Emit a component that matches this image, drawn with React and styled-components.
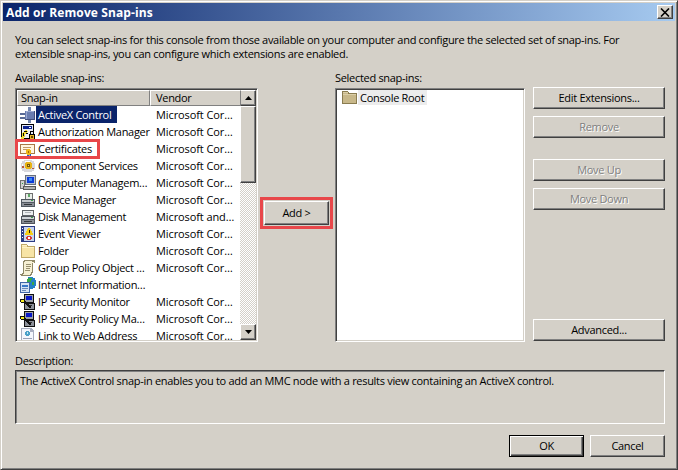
import React from "react";
import styled, { createGlobalStyle, css } from "styled-components";

const Global = createGlobalStyle`
  html, body { margin: 0; padding: 0; background: #d4d0c8; }
  * { box-sizing: border-box; }
`;

const Win = styled.div`
  width: 678px; height: 470px; background: #d4d0c8; color: #000;
  font: 11px/14px "Open Sans", "Noto Sans", sans-serif;
  letter-spacing: -0.3px;
  border: 1px solid; border-color: #d4d0c8 #404040 #404040 #d4d0c8;
  box-shadow: inset 1px 1px 0 #fff, inset -1px -1px 0 #808080;
  padding: 2px 2px 0 2px;
  display: flex; flex-direction: column;
  overflow: hidden;
`;
const TitleBar = styled.div`
  height: 18px; flex: none; display: flex; align-items: center; justify-content: space-between;
  background: linear-gradient(90deg, #0a246a, #a6caf0);
  color: #fff; font: bold 12px "Open Sans", sans-serif; letter-spacing: 0.1px;
  padding: 0 2px 0 3px;
`;
const CloseBtn = styled.div`
  width: 16px; height: 14px; background: #d4d0c8; display: flex; align-items: center; justify-content: center;
  border: 1px solid; border-color: #fff #404040 #404040 #fff;
  box-shadow: inset -1px -1px 0 #808080;
`;
const Body = styled.div`
  flex: 1; padding: 12px 10px 0 12px; display: flex; flex-direction: column;
`;
const Intro = styled.p`margin: 0; height: 28px; line-height: 14px; white-space: pre-line;`;
const Columns = styled.div`
  margin-top: 10px; display: grid; grid-template-columns: 243px 77px 190px 140px; height: 271px;
`;
const Pane = styled.div`display: flex; flex-direction: column; min-width: 0;`;
const Label = styled.div`height: 14px; margin-bottom: 3px;`;
const ListBox = styled.div`
  height: 254px; background: #fff; position: relative;
  border: 1px solid; border-color: #808080 #fff #fff #808080;
  box-shadow: inset 1px 1px 0 #404040, inset -1px -1px 0 #d4d0c8;
  padding: 1px;
  display: flex;
`;
const ListInner = styled.div`flex: 1; min-width: 0; clip-path: inset(0 -10px 0 -10px);`;
const Head = styled.div`display: grid; grid-template-columns: 133px 91px; height: 16px;`;
const HeadCell = styled.div`
  background: #d4d0c8; padding-left: ${p => p.$pad}px; line-height: 14px; white-space: nowrap;
  border: 1px solid; border-color: #fff #808080 #808080 #fff;
`;
const Row = styled.div`display: grid; grid-template-columns: 134px 90px; height: 17px; align-items: center;`;
const NameCell = styled.div`
  display: flex; align-items: center; height: ${p => p.$h || 17}px; padding-left: ${p => p.$inset}px; position: relative;
`;
const IconWrap = styled.span`width: 16px; height: 16px; flex: none; display: block;
  svg { display: block; }
`;
const Name = styled.span`
  padding: 0 1px 0 2px; height: 100%; display: flex; align-items: center; white-space: nowrap;
  ${p => p.$sel && css`background: #0a246a; color: #fff; padding-right: 6px;`}
  ${p => p.$soft && css`background: #ececec; padding-right: 3px;`}
`;
const Vendor = styled.div`padding-left: 5px; white-space: nowrap; line-height: 17px; letter-spacing: -0.1px;`;
const Callout = styled.div`
  position: absolute; left: -2px; top: -1px; width: 85px; height: 20px;
  border: 3px solid #e8474a; pointer-events: none; z-index: 2;
`;
const ScrollBar = styled.div`width: 16px; flex: none; display: flex; flex-direction: column;
  background-color: #fff;
  background-image: conic-gradient(#d4d0c8 25%, #fff 0 50%, #d4d0c8 0 75%, #fff 0);
  background-size: 2px 2px;
`;
const ScrollButton = styled.div`
  width: 16px; height: 16px; background: #d4d0c8; flex: none; display: flex; align-items: center; justify-content: center;
  border: 1px solid; border-color: #fff #404040 #404040 #fff; box-shadow: inset -1px -1px 0 #808080;
`;
const Thumb = styled(ScrollButton)`height: 77px;`;
const Track = styled.div`flex: 1;`;
const AddSlot = styled.div`padding: 130px 0 0 6px;`;
const Btn = styled.div`
  height: 22px; background: #d4d0c8; display: flex; align-items: center; justify-content: center; white-space: nowrap;
  border: 1px solid; border-color: #fff #404040 #404040 #fff; box-shadow: inset -1px -1px 0 #808080;
  ${p => p.$off && css`color: #808080; text-shadow: 1px 1px 0 #fff;`}
  ${p => p.$def && css`border: 1px solid #000; box-shadow: inset 1px 1px 0 #fff, inset -1px -1px 0 #404040, inset -2px -2px 0 #808080;`}
`;
const AddBtn = styled(Btn)`
  width: 65px; height: 24px; outline: 3px solid #e8474a; outline-offset: 1px;
`;
const Side = styled.div`display: flex; flex-direction: column; margin-left: 8px; padding: 16px 0 1px; width: 132px;`;
const SideBtn = styled(Btn)`margin-bottom: ${p => p.$gap || 7}px;`;
const Spacer = styled.div`flex: 1;`;
const DescLabel = styled.div`margin-top: 12px; height: 14px;`;
const DescBox = styled.div`
  margin-top: 2px; height: 54px; width: 650px; padding: 3px 4px;
  border: 1px solid; border-color: #404040 #fff #fff #404040;
  box-shadow: inset 1px 1px 0 #808080;
`;
const Footer = styled.div`display: flex; justify-content: flex-end; gap: 6px; margin-top: 11px; width: 650px;`;
const FootBtn = styled(Btn)`width: 75px;`;

const S = ({ children }) => (
  <svg width="16" height="16" viewBox="0 0 16 16" shapeRendering="crispEdges">{children}</svg>
);

const icons = {
  activex: <S>
    <path d="M8 0h3v4H8zM8 13h3v3H8z" fill="#7486ae"/>
    <path d="M0 6h6v2H0zM0 10h6v2H0z" fill="#5a6b96"/>
    <path d="M5 4h10v9H5z" fill="#6a7db0"/><path d="M6 4h8v1H6zM6 5h1v7H6z" fill="#9aa9d0"/><path d="M5 12h10v1H5zM14 4h1v9h-1z" fill="#43507c"/>
  </S>,
  auth: <S>
    <path d="M1 0h13v15H1z" fill="#000"/><path d="M2 1h11v13H2z" fill="#e8ecf4"/><path d="M3 2h9v3H3z" fill="#0e2490"/><path d="M9 3h2v1H9z" fill="#fff"/>
    <path d="M2 11l1-3 2-2h2l1 2-2 1-1 3-1 3H1z" fill="#f2dc30"/><path d="M4 7h3v1H4zM3 9h1v3H3zM6 9h2v1H6z" fill="#000"/>
    <path d="M9 10h6v6H9z" fill="#000"/><path d="M10 11h4v4h-4z" fill="#e8b828"/><path d="M11 12h2v2h-2z" fill="#704800"/><path d="M10 8h1v2h-1zM13 8h1v2h-1zM10 7h4v1h-4z" fill="#000"/>
  </S>,
  cert: <S>
    <path d="M0 3h15v10H0z" fill="#a87848"/><path d="M1 4h13v8H1z" fill="#fff6e0"/><path d="M3 6h8v1H3zM3 8h5v1H3z" fill="#c09868"/>
    <path d="M7 13h4v3H7z" fill="#2858c8"/><path d="M9 13h1v3H9z" fill="#88a8f0"/><path d="M6 9h5v4H6z" fill="#f0b818"/><path d="M7 8h3v6H7z" fill="#f0b818"/><path d="M8 10h1v2H8z" fill="#a06808"/>
  </S>,
  comp: <S>
    <path d="M4 2h8v1h2v2h1v6h-1v2h-2v1H4v-1H2v-2H1V5h1V3h2z" fill="#d8d8dc"/><path d="M5 3h5v1H5zM2 6h1v3H2z" fill="#fff"/>
    <path d="M6 4h5v1h1v5h-1v1H6v-1H5V5h1z" fill="#e8b418"/><path d="M7 6h3v3H7z" fill="#7a5808"/><path d="M8 7h1v1H8z" fill="#f0d868"/>
    <path d="M2 8h2v2H2zM12 10h2v1h-2z" fill="#b85838"/>
  </S>,
  computer: <S>
    <path d="M5 0h11v10H5z" fill="#68707c"/><path d="M6 1h9v8H6z" fill="#b8c0d0"/><path d="M7 2h7v6H7z" fill="#0c3cd8"/><path d="M9 3h3v3H9z" fill="#3c8cf0"/>
    <path d="M0 5h5v9H0z" fill="#707070"/><path d="M1 6h3v7H1z" fill="#d0d0d0"/><path d="M2 8h1v1H2z" fill="#30a040"/>
    <path d="M3 11h13v4H3z" fill="#585858"/><path d="M4 12h11v2H4z" fill="#b0b0b0"/>
  </S>,
  device: <S>
    <path d="M5 1h8v6H5z" fill="#707070"/><path d="M6 2h6v5H6z" fill="#e8ece8"/><path d="M8 2h2v3H8z" fill="#60a868"/>
    <path d="M1 7h14v8H1z" fill="#505860"/><path d="M2 8h12v2H2z" fill="#c4c8cc"/><path d="M2 11h12v3H2z" fill="#888c94"/><path d="M11 8h2v1h-2z" fill="#40a050"/><path d="M4 12h8v1H4z" fill="#303438"/>
  </S>,
  disk: <S>
    <path d="M2 1h12v6H2z" fill="#606468"/><path d="M3 2h10v4H3z" fill="#eceef0"/><path d="M5 3h6v1H5z" fill="#b0b4b8"/>
    <path d="M1 7h14v8H1z" fill="#50545c"/><path d="M2 8h12v2H2z" fill="#d0d4d8"/><path d="M2 11h12v3H2z" fill="#888c94"/><path d="M11 8h2v1h-2z" fill="#40a050"/><path d="M4 12h8v1H4z" fill="#383c40"/>
  </S>,
  event: <S>
    <path d="M1 0h14v16H1z" fill="#2c3c84"/><path d="M4 1h10v14H4z" fill="#c8d4ec"/><path d="M2 2h1v1H2zM2 5h1v1H2zM2 8h1v1H2zM2 11h1v1H2z" fill="#fff"/>
    <path d="M8 2h2v1h1v2h1v2h1v2H5V7h1V5h1V3h1z" fill="#f4cc18"/><path d="M9 4h1v3H9z" fill="#302000"/>
    <path d="M7 10h4v1h1v2h-1v1H7v-1H6v-2h1z" fill="#d83838"/><path d="M8 11h2v2H8z" fill="#fff"/>
  </S>,
  folder: <S>
    <path d="M1 1h6v1h1v1h7v12H1z" fill="#c0a868"/><path d="M2 2h5v2h7v10H2z" fill="#f7e4a6"/><path d="M2 4h12v1H2z" fill="#fff4c8"/><path d="M2 2h5v1H2z" fill="#fff4c8"/>
  </S>,
  folderRoot: <S>
    <path d="M0 1h6v1h1v1h8v11H0z" fill="#8a7c50"/><path d="M1 2h5v2h8v9H1z" fill="#c8b88a"/><path d="M1 4h13v1H1zM1 2h5v1H1z" fill="#dccfa8"/>
  </S>,
  gpo: <S>
    <path d="M4 0h11v3h-2v9l-1 1v1l-2 2H1l-1-2 3-1V1z" fill="#908868"/><path d="M5 1h7v1h2v1h-2v8l-1 2-1 2H2l2-2V2z" fill="#f6f0d4"/>
    <path d="M6 4h5v1H6zM6 6h5v1H6zM6 8h4v1H6zM5 10h5v1H5z" fill="#989070"/>
  </S>,
  iis: <S>
    <path d="M8 0h5v1h2v2h1v6h-1v2h-2v1H8z" fill="#2480c8"/><path d="M8 1h4v2h-1v2H9v1H7V2z" fill="#38a848"/><path d="M12 5h2v3h-2z" fill="#38a848"/>
    <path d="M0 5h10v11H0z" fill="#4068a8"/><path d="M1 6h8v9H1z" fill="#d4e2f4"/><path d="M2 8h6v2H2z" fill="#3878c8"/><path d="M2 11h6v1H2zM2 13h4v1H2z" fill="#6888b8"/>
  </S>,
  ipsec: <S>
    <path d="M4 0h10v9H4z" fill="#101010"/><path d="M5 1h8v7H5z" fill="#9ca0a8"/><path d="M6 2h6v4H6z" fill="#0818c8"/>
    <path d="M4 9h11v7H4z" fill="#101010"/><path d="M5 10h9v5H5z" fill="#8c9098"/><path d="M7 11h5v1H7z" fill="#303030"/>
    <path d="M0 5h4v1h1v1l6 5v2H9L4 9H1V8H0z" fill="#101010"/><path d="M1 6h3v2l6 5h-1L4 8H1z" fill="#f4ec20"/>
  </S>,
  link: <S>
    <path d="M1 0h10l3 3v13H1z" fill="#a8aec0"/><path d="M2 1h8v3h3v11H2z" fill="#f4f6fc"/>
    <path d="M6 3h3v1h1v3H9v1H6V7H5V4h1z" fill="#4aa0c8"/><path d="M7 4h1v2H7z" fill="#c0e4f0"/><path d="M3 10h9v1H3zM3 12h9v1H3z" fill="#98a0b8"/>
  </S>,
};

const rows = [
  ["activex", "ActiveX Control", "Microsoft Cor…", true],
  ["auth", "Authorization Manager", "Microsoft Cor…"],
  ["cert", "Certificates", "Microsoft Cor…", false, true],
  ["comp", "Component Services", "Microsoft Cor…"],
  ["computer", "Computer Managem…", "Microsoft Cor…"],
  ["device", "Device Manager", "Microsoft Cor…"],
  ["disk", "Disk Management", "Microsoft and…"],
  ["event", "Event Viewer", "Microsoft Cor…"],
  ["folder", "Folder", "Microsoft Cor…"],
  ["gpo", "Group Policy Object …", "Microsoft Cor…"],
  ["iis", "Internet Information…", ""],
  ["ipsec", "IP Security Monitor", "Microsoft Cor…"],
  ["ipsec", "IP Security Policy Ma…", "Microsoft Cor…"],
  ["link", "Link to Web Address", "Microsoft Cor…"],
];

export default function App() {
  return (
    <Win>
      <Global />
      <TitleBar>
        <span>Add or Remove Snap-ins</span>
        <CloseBtn>
          <svg width="10" height="9" viewBox="0 0 10 9"><path d="M1 0.500l8 8M9 0.500l-8 8" stroke="#000" strokeWidth="1.600" /></svg>
        </CloseBtn>
      </TitleBar>
      <Body>
        <Intro>{"You can select snap-ins for this console from those available on your computer and configure the selected set of snap-ins. For\nextensible snap-ins, you can configure which extensions are enabled."}</Intro>
        <Columns>
          <Pane>
            <Label>Available snap-ins:</Label>
            <ListBox>
              <ListInner>
                <Head><HeadCell $pad={3}>Snap-in</HeadCell><HeadCell $pad={5}>Vendor</HeadCell></Head>
                {rows.map(([ic, n, v, sel, call]) => (
                  <Row key={n}>
                    <NameCell $inset={3}>
                      <IconWrap>{icons[ic]}</IconWrap>
                      <Name $sel={sel}>{n}</Name>
                      {call && <Callout />}
                    </NameCell>
                    <Vendor>{v}</Vendor>
                  </Row>
                ))}
              </ListInner>
              <ScrollBar>
                <ScrollButton><svg width="7" height="4" viewBox="0 0 7 4"><path d="M3.500 0L7 4H0z" /></svg></ScrollButton>
                <Thumb />
                <Track />
                <ScrollButton><svg width="7" height="4" viewBox="0 0 7 4"><path d="M0 0h7L3.500 4z" /></svg></ScrollButton>
              </ScrollBar>
            </ListBox>
          </Pane>
          <AddSlot><AddBtn>Add &gt;</AddBtn></AddSlot>
          <Pane>
            <Label>Selected snap-ins:</Label>
            <ListBox>
              <ListInner>
                <NameCell $inset={5} $h={15}>
                  <IconWrap>{icons.folderRoot}</IconWrap>
                  <Name $soft>Console Root</Name>
                </NameCell>
              </ListInner>
            </ListBox>
          </Pane>
          <Side>
            <SideBtn>Edit Extensions...</SideBtn>
            <SideBtn $off $gap={21}>Remove</SideBtn>
            <SideBtn $off>Move Up</SideBtn>
            <SideBtn $off>Move Down</SideBtn>
            <Spacer />
            <Btn>Advanced...</Btn>
          </Side>
        </Columns>
        <DescLabel>Description:</DescLabel>
        <DescBox>The ActiveX Control snap-in enables you to add an MMC node with a results view containing an ActiveX control.</DescBox>
        <Footer>
          <FootBtn $def>OK</FootBtn>
          <FootBtn>Cancel</FootBtn>
        </Footer>
      </Body>
    </Win>
  );
}
